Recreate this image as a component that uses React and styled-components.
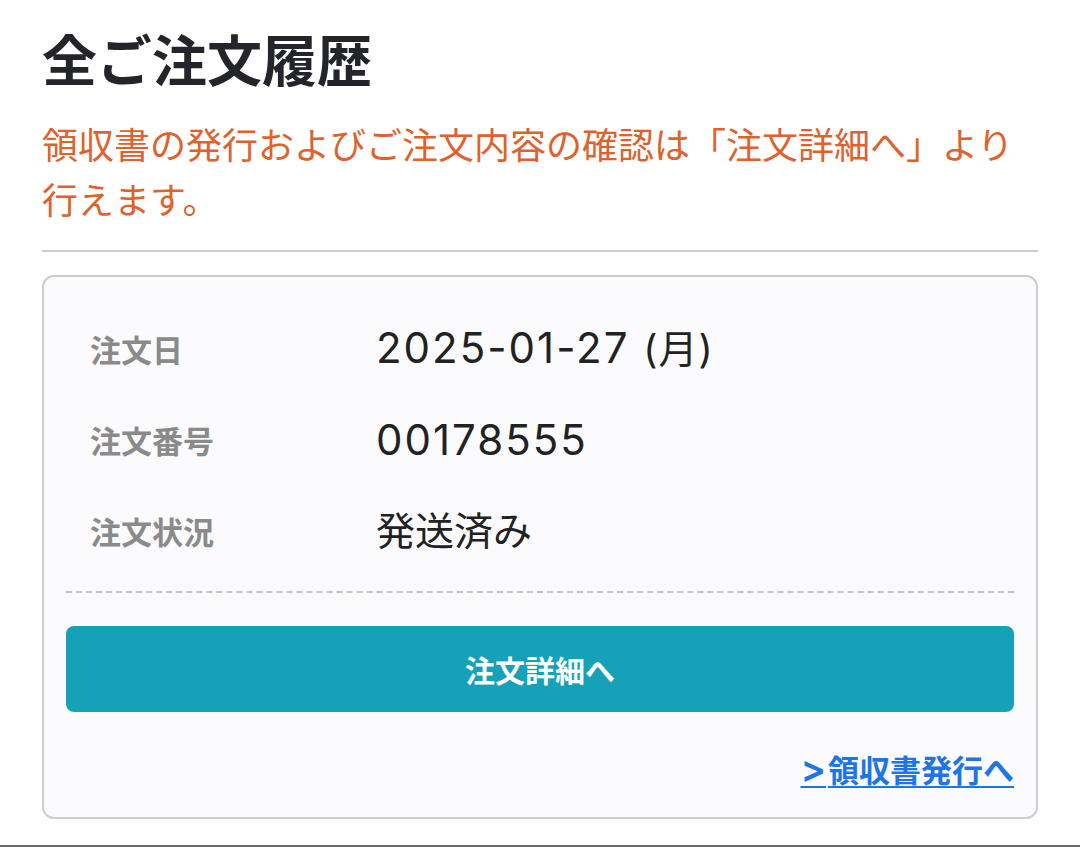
import React from "react";
import styled, { createGlobalStyle } from "styled-components";

const Global = createGlobalStyle`
  html, body { margin: 0; padding: 0; background: #ffffff; }
  body { font-family: "Noto Sans CJK JP", "Noto Sans", sans-serif; color: #222; }
`;

const Page = styled.div`
  display: flex;
  flex-direction: column;
  min-height: 847px;
`;

const Main = styled.main`
  padding: 18px 42px 0 42px;
  display: flex;
  flex-direction: column;
`;

const Title = styled.h1`
  margin: 0;
  font-size: 55px;
  line-height: 78px;
  font-weight: 700;
  color: #23252a;
`;

const Notice = styled.p`
  margin: 20px 0 0 0;
  font-size: 36px;
  line-height: 55px;
  font-weight: 400;
  color: #e0612b;
`;

const Rule = styled.hr`
  margin: 24px 0 0 0;
  border: 0;
  border-top: 2px solid #cfcfcf;
`;

const Card = styled.section`
  margin-top: 23px;
  border: 2px solid #cdcdcd;
  border-radius: 12px;
  background: #fbfbfd;
  padding: 44px 22px 26px 22px;
  display: flex;
  flex-direction: column;
`;

const InfoList = styled.dl`
  margin: 0;
  padding: 0 24px;
  display: grid;
  grid-template-columns: 288px 1fr;
  row-gap: 37px;
  align-items: center;
`;

const Label = styled.dt`
  font-size: 31px;
  line-height: 54px;
  font-weight: 700;
  color: #8a8a8a;
`;

const Value = styled.dd`
  margin: 0 0 0 -2px;
  font-family: Inter, "Noto Sans CJK JP", sans-serif;
  font-size: ${(p) => (p.$cjk ? "39px" : "42px")};
  letter-spacing: ${(p) => (p.$cjk ? "0" : "2px")};
  line-height: 54px;
  font-weight: 400;
  color: #222;
`;

const Paren = styled.span`
  font-size: 39px;
  letter-spacing: 1px;
`;

const Dashed = styled.div`
  margin-top: 33px;
  border-top: 2px dashed #c4c4c4;
`;

const DetailButton = styled.button`
  margin-top: 33px;
  height: 86px;
  border: 0;
  border-radius: 8px;
  background: #15a1b8;
  color: #ffffff;
  font-family: inherit;
  font-size: 30px;
  font-weight: 700;
  cursor: pointer;
`;

const LinkRow = styled.div`
  margin-top: 34px;
  display: flex;
  justify-content: flex-end;
`;

const ReceiptLink = styled.a`
  font-size: 31px;
  line-height: 44px;
  font-weight: 700;
  color: #1f74e6;
  text-decoration: underline;
  text-underline-offset: 4px;
  text-decoration-thickness: 2px;
`;

const Chevron = styled.span`
  font-family: Inter, sans-serif;
  font-size: 38px;
  font-weight: 600;
  margin-right: 2px;
`;

const Footer = styled.footer`
  margin-top: auto;
  height: 0;
  border-top: 2px solid #6a6a6a;
`;

export default function App() {
  return (
    <Page>
      <Global />
      <Main>
        <Title>全ご注文履歴</Title>
        <Notice>領収書の発行およびご注文内容の確認は「注文詳細へ」より行えます。</Notice>
        <Rule />
        <Card>
          <InfoList>
            <Label>注文日</Label>
            <Value>
              2025-01-27 <Paren>(月)</Paren>
            </Value>
            <Label>注文番号</Label>
            <Value>00178555</Value>
            <Label>注文状況</Label>
            <Value $cjk>発送済み</Value>
          </InfoList>
          <Dashed />
          <DetailButton type="button">注文詳細へ</DetailButton>
          <LinkRow>
            <ReceiptLink href="#">
              <Chevron>&gt;</Chevron>領収書発行へ
            </ReceiptLink>
          </LinkRow>
        </Card>
      </Main>
      <Footer />
    </Page>
  );
}
